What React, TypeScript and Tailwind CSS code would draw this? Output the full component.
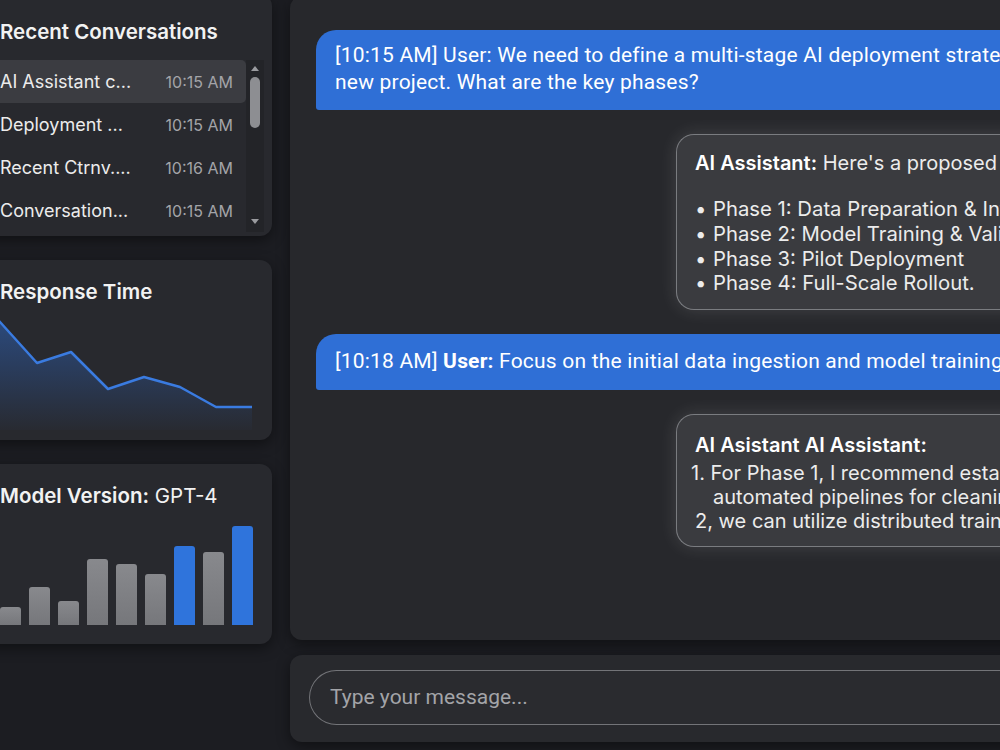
import React from "react";

const rows = [
  { name: "AI Assistant c...", time: "10:15 AM", active: true },
  { name: "Deployment ...", time: "10:15 AM" },
  { name: "Recent Ctrnv....", time: "10:16 AM" },
  { name: "Conversation...", time: "10:15 AM" },
];

const bars = [
  { h: 18, blue: false },
  { h: 38, blue: false },
  { h: 24, blue: false },
  { h: 66, blue: false },
  { h: 61, blue: false },
  { h: 51, blue: false },
  { h: 79, blue: true },
  { h: 73, blue: false },
  { h: 99, blue: true },
];

const pts: [number, number][] = [
  [0, -4],
  [20, 18],
  [57, 59],
  [91, 48],
  [128, 85],
  [164, 73],
  [200, 83],
  [236, 103],
  [272, 103],
];

function LineChart() {
  const line = pts.map((p) => p.join(",")).join(" ");
  const area = `0,126 ${line} 272,126`;
  return (
    <svg width="292" height="126" viewBox="0 0 292 126" className="block">
      <defs>
        <linearGradient id="rt" x1="0" y1="0" x2="0" y2="1">
          <stop offset="0" stopColor="#2f6fd6" stopOpacity="0.55" />
          <stop offset="1" stopColor="#2f6fd6" stopOpacity="0.02" />
        </linearGradient>
      </defs>
      <polygon points={area} fill="url(#rt)" />
      <polyline
        points={line}
        fill="none"
        stroke="#3a7be0"
        strokeWidth="2.5"
        strokeLinejoin="round"
      />
    </svg>
  );
}

const roboto = { fontFamily: "Roboto, 'Liberation Sans', sans-serif" };

export default function App() {
  return (
    <div
      className="w-[1000px] h-[750px] overflow-hidden bg-[#1c1d22] text-white"
      style={{ fontFamily: "Inter, 'Noto Sans', sans-serif" }}
    >
      <div className="flex gap-[18px] ml-[-20px]">
        {/* Left column */}
        <div className="w-[292px] shrink-0 flex flex-col gap-[24px] mt-[-6px]">
          {/* Recent conversations */}
          <div className="h-[242px] rounded-[12px] bg-[#28292e] shadow-[0_4px_14px_rgba(0,0,0,0.45)] pt-[26px] pr-[8px]">
            <div className="pl-[20px] text-[20.5px] leading-[24px] font-semibold text-[#f2f2f2]">
              Recent Conversations
            </div>
            <div className="mt-[16px] flex">
              <div className="w-[266px]">
                {rows.map((r) => (
                  <div
                    key={r.name}
                    className={
                      "h-[43px] flex items-center justify-between pl-[20px] pr-[13px] rounded-r-[5px] " +
                      (r.active ? "bg-[#3b3c41]" : "")
                    }
                  >
                    <span className="text-[18px] text-[#ececec]">{r.name}</span>
                    <span className="text-[16px] text-[#a3a4a8]">{r.time}</span>
                  </div>
                ))}
              </div>
              <div className="w-[18px] h-[172px] bg-[#232428] flex flex-col items-center pt-[6px] pb-[8px]">
                <div className="w-0 h-0 border-l-[4px] border-r-[4px] border-b-[5px] border-l-transparent border-r-transparent border-b-[#9a9b9f]" />
                <div className="mt-[6px] w-[10px] h-[51px] rounded-full bg-[#8d8e92]" />
                <div className="flex-1" />
                <div className="w-0 h-0 border-l-[4px] border-r-[4px] border-t-[5px] border-l-transparent border-r-transparent border-t-[#9a9b9f]" />
              </div>
            </div>
          </div>

          {/* Response time */}
          <div className="h-[180px] rounded-[12px] bg-[#28292e] shadow-[0_4px_14px_rgba(0,0,0,0.45)] pt-[20px] overflow-hidden">
            <div className="pl-[20px] text-[20.5px] leading-[24px] font-semibold text-[#f2f2f2]">
              Response Time
            </div>
            <LineChart />
          </div>

          {/* Model version */}
          <div className="h-[180px] rounded-[12px] bg-[#28292e] shadow-[0_4px_14px_rgba(0,0,0,0.45)] pt-[20px] pl-[20px] flex flex-col">
            <div className="text-[20.5px] leading-[24px] text-[#f2f2f2]">
              <span className="font-semibold">Model Version:</span>{" "}
              <span>GPT-4</span>
            </div>
            <div className="flex-1 flex items-end gap-[8px] pb-[19px]">
              {bars.map((b, i) => (
                <div
                  key={i}
                  className={
                    "w-[21px] rounded-t-[3px] " +
                    (b.blue ? "bg-[#2f74dc]" : "bg-gradient-to-b from-[#88898d] to-[#76777b]")
                  }
                  style={{ height: b.h }}
                />
              ))}
            </div>
          </div>
        </div>

        {/* Right column */}
        <div className="w-[780px] shrink-0 flex flex-col gap-[15px]">
          <div className="h-[644px] mt-[-4px] rounded-[12px] bg-[#27282c] shadow-[0_4px_14px_rgba(0,0,0,0.45)] pt-[34px] pl-[26px] flex flex-col gap-[24px] overflow-hidden">
            {/* user 1 */}
            <div
              className="h-[80px] rounded-tl-[20px] rounded-bl-[3px] bg-[#2f6fd6] pl-[19px] pt-[12px] text-[21px] leading-[27px] tracking-[0.2px] text-white whitespace-nowrap"
              style={roboto}
            >
              <div>[10:15 AM] User: We need to define a multi-stage AI deployment strategy for our</div>
              <div>new project. What are the key phases?</div>
            </div>

            {/* assistant 1 */}
            <div className="ml-[360px] h-[176px] rounded-l-[18px] border-[1.5px] border-r-0 border-[#7a7c80] bg-[#3a3b3f] shadow-[0_0_18px_rgba(255,255,255,0.13)] pl-[18px] pt-[16px] text-[20px] leading-[25px] text-[#ececec] whitespace-nowrap">
              <div>
                <span className="font-semibold text-white">AI Assistant:</span> Here's a proposed multi-stage deployment strategy:
              </div>
              <div className="mt-[21px]">
                {[
                  "Phase 1: Data Preparation & Infrastructure Setup",
                  "Phase 2: Model Training & Validation",
                  "Phase 3: Pilot Deployment",
                  "Phase 4: Full-Scale Rollout.",
                ].map((t) => (
                  <div key={t} className="flex leading-[24.8px] text-[20.3px]">
                    <span className="w-[18px] shrink-0">•</span>
                    <span>{t}</span>
                  </div>
                ))}
              </div>
            </div>

            {/* user 2 */}
            <div
              className="h-[56px] rounded-tl-[20px] rounded-bl-[3px] bg-[#2f6fd6] pl-[19px] flex items-center text-[21px] tracking-[0.2px] text-white whitespace-nowrap"
              style={roboto}
            >
              [10:18 AM]&nbsp;<span className="font-bold">User:</span>&nbsp;Focus on the initial data ingestion and model training phases.
            </div>

            {/* assistant 2 */}
            <div className="ml-[360px] h-[133px] rounded-l-[18px] border-[1.5px] border-r-0 border-[#7a7c80] bg-[#3a3b3f] shadow-[0_0_18px_rgba(255,255,255,0.13)] pl-[14px] pt-[18px] text-[20px] leading-[25px] text-[#ececec] whitespace-nowrap">
              <div className="pl-[4px] font-semibold text-white">AI Asistant AI Assistant:</div>
              <div className="mt-[3px] leading-[24px]">
                <div>1. For Phase 1, I recommend establishing robust,</div>
                <div className="pl-[22px]">automated pipelines for cleaning data. For Phase</div>
                <div className="pl-[4px]">2, we can utilize distributed training clusters.</div>
              </div>
            </div>
          </div>

          {/* input */}
          <div className="h-[87px] rounded-[12px] bg-[#28292d] shadow-[0_4px_14px_rgba(0,0,0,0.45)] pt-[15px] pl-[19px]">
            <div
              className="h-[55px] rounded-l-full border-[1.5px] border-r-0 border-[#737478] bg-[#2a2b2f] pl-[20px] flex items-center text-[21px] text-[#a3a4a8]"
              style={roboto}
            >
              Type your message...
            </div>
          </div>
        </div>
      </div>
    </div>
  );
}
